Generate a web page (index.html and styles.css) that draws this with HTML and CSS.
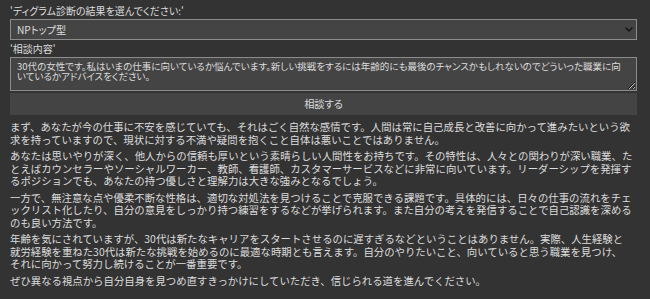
FILE: index.html
```html
<!DOCTYPE html>
<html lang="ja">
<head>
  <meta charset="UTF-8">
  <meta name="viewport" content="width=device-width, initial-scale=1">
  <title>ディグラム相談</title>
  <link rel="stylesheet" href="styles.css">
</head>
<body>

  <!-- 診断結果 -->
  <label class="field-label" for="typeSelect">'ディグラム診断の結果を選んでください:'</label>
  <div class="select-wrap">
    <select id="typeSelect" class="select-box">
      <option>NPトップ型</option>
    </select>
    <svg class="chevron" width="8" height="5" viewBox="0 0 8 5"><polyline points="0.6,0.6 4,4 7.4,0.6" fill="none" stroke="#111" stroke-width="1.4"/></svg>
  </div>

  <!-- 相談内容 -->
  <label class="field-label second" for="question">'相談内容'</label>
  <textarea id="question" class="question-box">30代の女性です。私はいまの仕事に向いているか悩んでいます。新しい挑戦をするには年齢的にも最後のチャンスかもしれないのでどういった職業に向
いているかアドバイスをください。</textarea>

  <button class="submit-btn">相談する</button>

  <!-- 回答 -->
  <div class="answer">
    <p>まず、あなたが今の仕事に不安を感じていても、それはごく自然な感情です。人間は常に自己成長と改善に向かって進みたいという欲求を持っていますので、現状に対する不満や疑問を抱くこと自体は悪いことではありません。</p>
    <p>あなたは思いやりが深く、他人からの信頼も厚いという素晴らしい人間性をお持ちです。その特性は、人々との関わりが深い職業、たとえばカウンセラーやソーシャルワーカー、教師、看護師、カスタマーサービスなどに非常に向いています。リーダーシップを発揮するポジションでも、あなたの持つ優しさと理解力は大きな強みとなるでしょう。</p>
    <p>一方で、無注意な点や優柔不断な性格は、適切な対処法を見つけることで克服できる課題です。具体的には、日々の仕事の流れをチェックリスト化したり、自分の意見をしっかり持つ練習をするなどが挙げられます。また自分の考えを発信することで自己認識を深めるのも良い方法です。</p>
    <p>年齢を気にされていますが、30代は新たなキャリアをスタートさせるのに遅すぎるなどということはありません。実際、人生経験と<br>就労経験を重ねた30代は新たな挑戦を始めるのに最適な時期とも言えます。自分のやりたいこと、向いていると思う職業を見つけ、<br>それに向かって努力し続けることが一番重要です。</p>
    <p>ぜひ異なる視点から自分自身を見つめ直すきっかけにしていただき、信じられる道を進んでください。</p>
  </div>

</body>
</html>
```

FILE: styles.css
```css
* { box-sizing: border-box; }

body {
  margin: 0;
  padding: 5px 13px 0 10px;
  background-color: #333;
  color: #ddd;
  font-family: "Noto Sans CJK JP", sans-serif;
}

.field-label {
  display: block;
  font-size: 10px;
  line-height: 12px;
  margin-bottom: 2px;
  font-feature-settings: "palt";
}

.field-label.second {
  margin-top: 3px;
  margin-bottom: 1.5px;
}

.select-wrap {
  position: relative;
}

.select-box {
  display: block;
  width: 100%;
  height: 21px;
  margin: 0;
  padding: 0 20px 0 6px;
  appearance: none;
  background-color: #444;
  color: #ddd;
  border: 1px solid #8c8c8c;
  border-radius: 0;
  font-family: inherit;
  font-size: 10.2px;
  font-feature-settings: "palt";
}

.chevron {
  position: absolute;
  right: 4px;
  top: 8px;
  pointer-events: none;
}

.question-box {
  display: block;
  width: 100%;
  height: 34px;
  margin: 0;
  padding: 3px 6px;
  background-color: #444;
  color: #ddd;
  border: 1px solid #8c8c8c;
  border-radius: 0;
  font-family: inherit;
  font-size: 9.5px;
  line-height: 10.4px;
  font-feature-settings: "palt";
  white-space: pre;
  overflow: hidden;
  resize: vertical;
}

.submit-btn {
  display: block;
  width: 100%;
  height: 22.5px;
  margin-top: 2px;
  background-color: #444;
  color: #ddd;
  border: none;
  font-family: inherit;
  font-size: 10.2px;
  font-feature-settings: "palt";
  cursor: pointer;
}

.submit-btn:hover {
  background-color: #4c4c4c;
}

.answer {
  margin-top: 6px;
}

.answer p {
  margin: 0 0 4px;
  font-size: 10.4px;
  line-height: 12.5px;
}
```
